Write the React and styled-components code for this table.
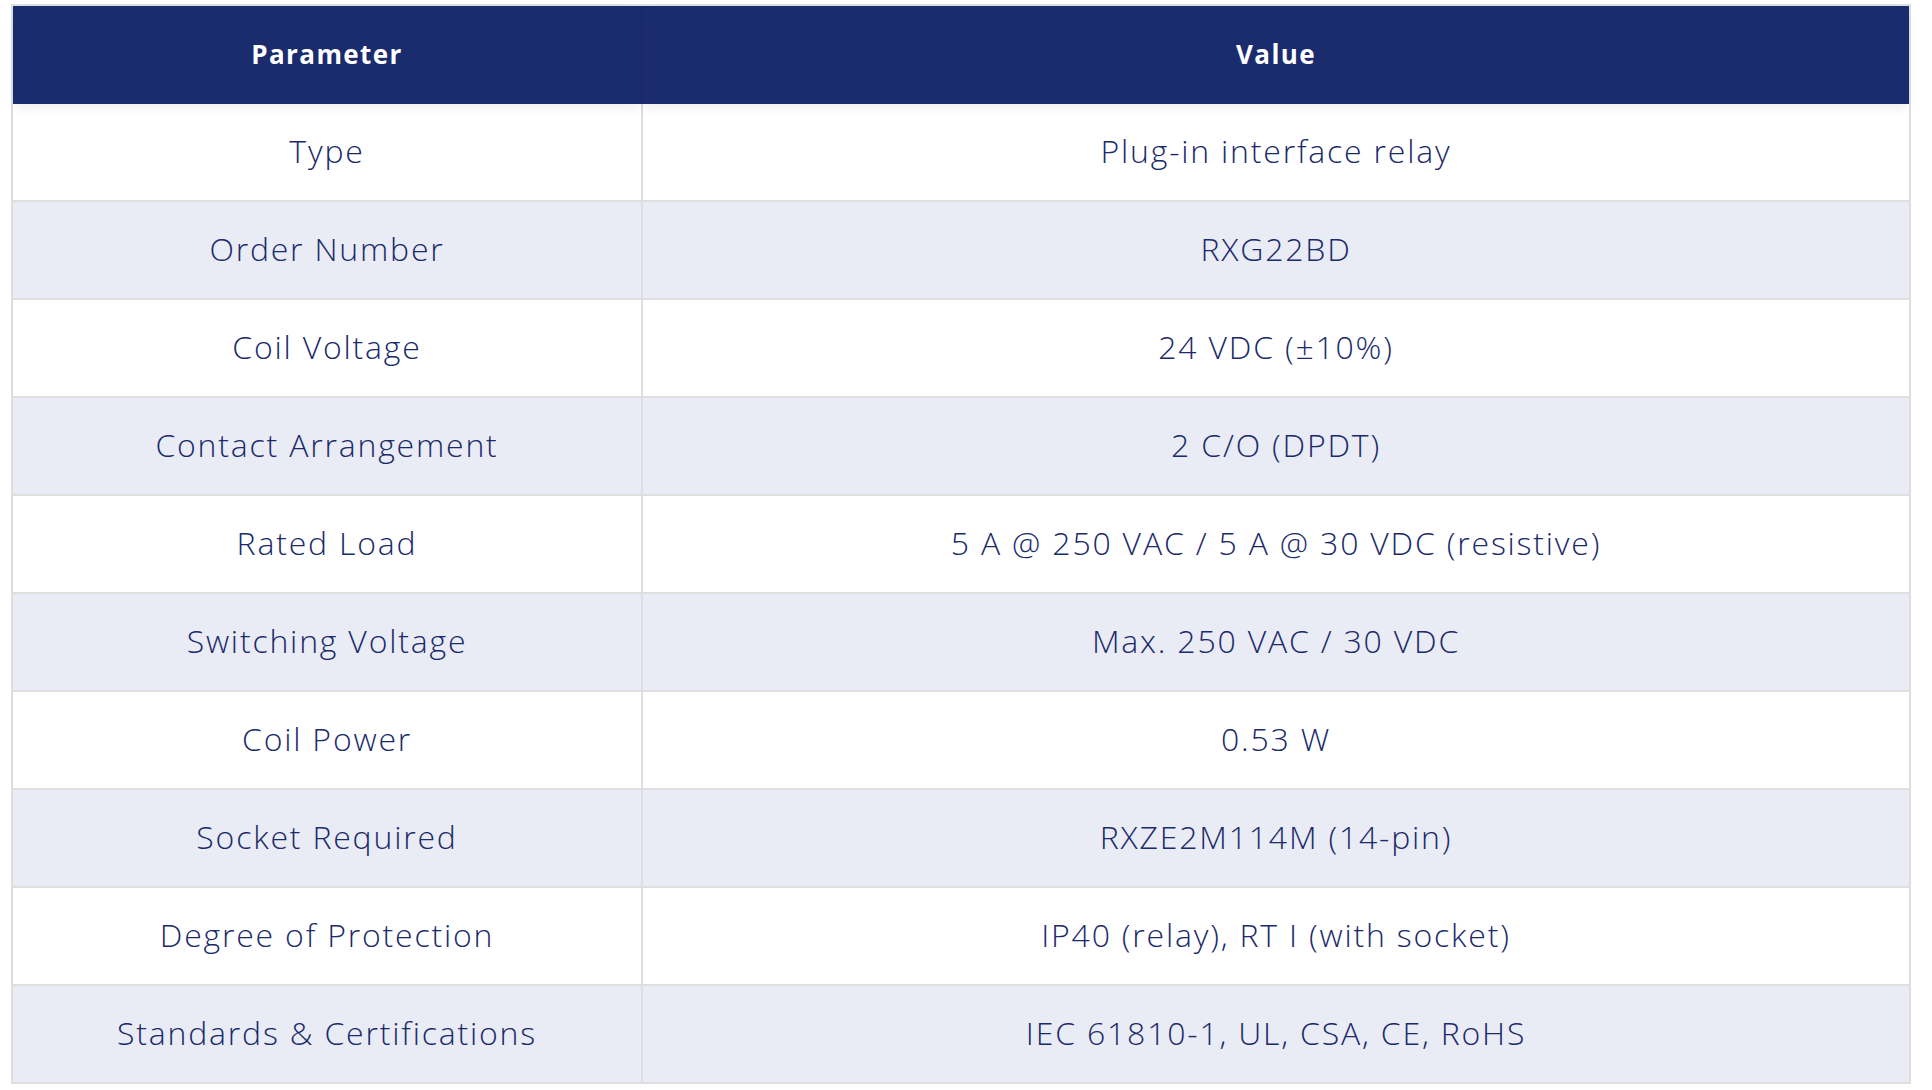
import React from 'react';
import styled, { createGlobalStyle } from 'styled-components';

const GlobalStyle = createGlobalStyle`
  html, body {
    margin: 0;
    background: #ffffff;
  }
`;

const rows = [
  ['Type', 'Plug-in interface relay'],
  ['Order Number', 'RXG22BD'],
  ['Coil Voltage', '24 VDC (±10%)'],
  ['Contact Arrangement', '2 C/O (DPDT)'],
  ['Rated Load', '5 A @ 250 VAC / 5 A @ 30 VDC (resistive)'],
  ['Switching Voltage', 'Max. 250 VAC / 30 VDC'],
  ['Coil Power', '0.53 W'],
  ['Socket Required', 'RXZE2M114M (14-pin)'],
  ['Degree of Protection', 'IP40 (relay), RT I (with socket)'],
  ['Standards & Certifications', 'IEC 61810-1, UL, CSA, CE, RoHS'],
];

const Page = styled.div`
  padding: 4px 21px 0 11px;
`;

const SpecTable = styled.table`
  width: 1900px;
  border-collapse: separate;
  border-spacing: 0;
  table-layout: fixed;
  border-top: 2px solid #dedede;
  border-left: 2px solid #dedede;
  border-right: 2px solid #dedede;
  font-family: 'Open Sans', 'Liberation Sans', sans-serif;
`;

const HeadRow = styled.tr`
  height: 98px;
`;

const HeadCell = styled.th`
  position: relative;
  z-index: 1;
  width: ${(p) => p.$width || 'auto'};
  padding: 0 0 2px;
  background: #1b2c6e;
  color: #ffffff;
  font-size: 26px;
  font-weight: 700;
  letter-spacing: 1.4px;
  text-align: center;
  vertical-align: middle;
  box-shadow: 0 6px 10px -2px rgba(20, 30, 60, 0.08);
  border-left: ${(p) => (p.$divider ? '2px solid #17276a' : 'none')};
`;

const Row = styled.tr`
  height: 98px;
  background: ${(p) => (p.$alt ? '#e9ecf4' : '#ffffff')};
`;

const Cell = styled.td`
  padding: 0 20px 3px;
  color: #1b2a6b;
  font-size: 32px;
  font-weight: 300;
  letter-spacing: 1.8px;
  text-align: center;
  vertical-align: middle;
  border-bottom: 2px solid #dedede;
  border-left: ${(p) => (p.$divider ? '2px solid #dedede' : 'none')};
`;

export default function App() {
  return (
    <Page>
      <GlobalStyle />
      <SpecTable>
        <thead>
          <HeadRow>
            <HeadCell $width="628px">Parameter</HeadCell>
            <HeadCell $divider>Value</HeadCell>
          </HeadRow>
        </thead>
        <tbody>
          {rows.map(([param, value], i) => (
            <Row key={param} $alt={i % 2 === 1}>
              <Cell>{param}</Cell>
              <Cell $divider>{value}</Cell>
            </Row>
          ))}
        </tbody>
      </SpecTable>
    </Page>
  );
}
